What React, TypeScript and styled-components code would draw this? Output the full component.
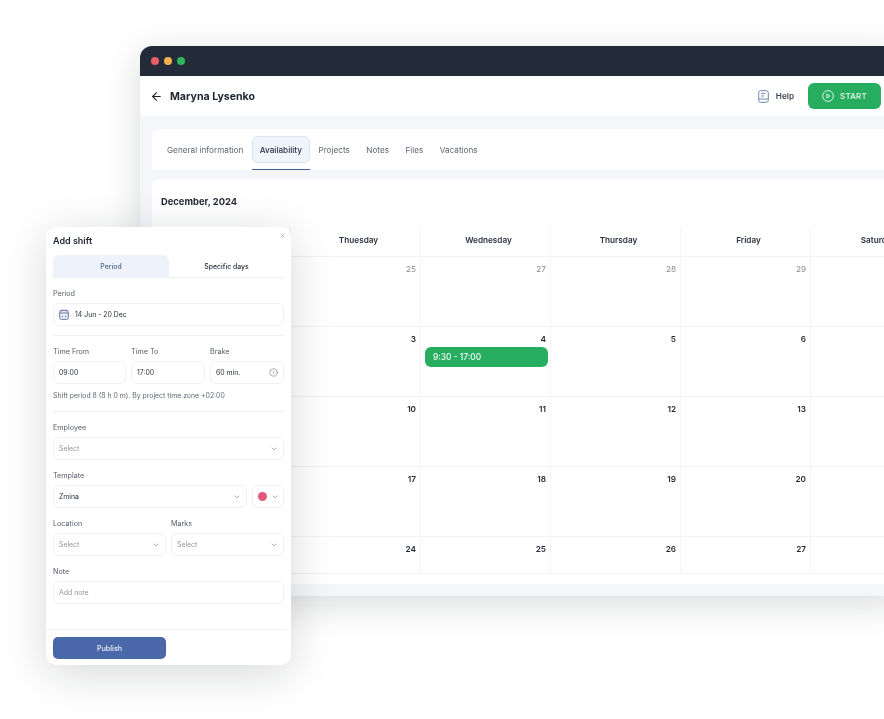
import React from "react";
import styled, { createGlobalStyle } from "styled-components";
import { ArrowLeft, ChevronDown, Info, X } from "lucide-react";

const Global = createGlobalStyle`
  html, body { margin: 0; padding: 0; background: #fff; }
  body { font-family: Inter, "Liberation Sans", sans-serif; color: #1f2733; }
  * { box-sizing: border-box; }
`;

const Stage = styled.div`
  position: relative;
  width: 884px;
  height: 719px;
  overflow: hidden;
  background: #fff;
  filter: blur(0.3px);
`;

const AppWindow = styled.div`
  position: absolute;
  left: 140px;
  top: 46px;
  width: 760px;
  height: 550px;
  display: flex;
  flex-direction: column;
  background: #f4f6fa;
  border-radius: 12px 12px 0 0;
  box-shadow: 0 8px 36px rgba(20, 24, 32, 0.16);
`;

const TitleBar = styled.div`
  height: 30px;
  flex: none;
  display: flex;
  align-items: center;
  gap: 5px;
  padding-left: 11px;
  background: #232b38;
  border-radius: 12px 12px 0 0;
`;

const Dot = styled.span<{ $c: string }>`
  width: 8px;
  height: 8px;
  border-radius: 50%;
  background: ${(p) => p.$c};
`;

const Header = styled.div`
  height: 40px;
  flex: none;
  display: flex;
  align-items: center;
  background: #fff;
  padding: 0 0 0 10px;
  width: 744px;
`;

const Name = styled.div`
  margin-left: 7px;
  font-size: 10.6px;
  font-weight: 700;
  color: #1c2430;
`;

const HelpLink = styled.div`
  margin-left: auto;
  display: flex;
  align-items: center;
  gap: 7px;
  font-size: 8.2px;
  font-weight: 600;
  color: #3c4450;
`;

const StartButton = styled.div`
  margin: 0 3px 0 14px;
  width: 73px;
  height: 26px;
  display: flex;
  align-items: center;
  justify-content: center;
  gap: 6px;
  background: #26ad60;
  border-radius: 6px;
  color: #eef9f2;
  font-size: 8px;
  font-weight: 500;
  letter-spacing: 0.2px;
`;

const Content = styled.div`
  flex: 1;
  display: flex;
  flex-direction: column;
  gap: 9px;
  padding: 13px 0 12px 12px;
`;

const TabsCard = styled.div`
  height: 41px;
  flex: none;
  display: flex;
  padding: 7px 0 0 7px;
  background: #fff;
  border-radius: 6px 0 0 0;
`;

const Tab = styled.div<{ $active?: boolean }>`
  position: relative;
  height: 27px;
  padding: 0 7px;
  margin-right: 0.4px;
  display: flex;
  align-items: center;
  font-size: 8.2px;
  font-weight: ${(p) => (p.$active ? 500 : 400)};
  color: ${(p) => (p.$active ? "#2b3340" : "#5f6670")};
  background: ${(p) => (p.$active ? "#f0f4fb" : "transparent")};
  border: ${(p) => (p.$active ? "1px solid #dbe3f0" : "1px solid transparent")};
  border-radius: 6px;
  &::after {
    content: "";
    display: ${(p) => (p.$active ? "block" : "none")};
    position: absolute;
    left: -1px;
    right: -1px;
    bottom: -8px;
    height: 1px;
    background: #3f5f9f;
  }
`;

const CalendarCard = styled.div`
  flex: 1;
  background: #fff;
  border-radius: 6px 0 0 0;
  padding: 0 0 0 9px;
  display: flex;
  flex-direction: column;
`;

const Month = styled.div`
  height: 48px;
  flex: none;
  padding-top: 17px;
  font-size: 9.4px;
  line-height: 12px;
  font-weight: 700;
  color: #1f2733;
`;

const Grid = styled.div`
  display: grid;
  grid-template-columns: repeat(6, 130px);
  grid-template-rows: 30px repeat(4, 70px) 37px;
`;

const HeadCell = styled.div`
  display: flex;
  align-items: center;
  justify-content: center;
  padding: 0 0 3px 6px;
  font-size: 8.2px;
  font-weight: 600;
  color: #2a3240;
  border-right: 1px solid #f4f5f8;
  border-bottom: 1px solid #f2f3f6;
`;

const DayCell = styled.div<{ $muted?: boolean }>`
  display: flex;
  flex-direction: column;
  align-items: flex-end;
  padding: 7px 4px 0 4px;
  font-size: 8.2px;
  line-height: 11px;
  font-weight: ${(p) => (p.$muted ? 400 : 600)};
  color: ${(p) => (p.$muted ? "#868b93" : "#222a35")};
  border-right: 1px solid #f4f5f8;
  border-bottom: 1px solid #f2f3f6;
`;

const Shift = styled.div`
  align-self: stretch;
  height: 20px;
  margin: 2px -2px 0 0;
  padding-left: 8px;
  display: flex;
  align-items: center;
  background: #27ad60;
  border-radius: 6px;
  color: #fff;
  font-size: 8.4px;
  font-weight: 500;
`;

const Modal = styled.div`
  position: absolute;
  left: 46px;
  top: 227px;
  width: 245px;
  height: 438px;
  background: #fff;
  border-radius: 10px;
  box-shadow: 0 8px 44px rgba(20, 24, 32, 0.17);
  display: flex;
  flex-direction: column;
  padding: 0 7px;
`;

const ModalTitle = styled.div`
  height: 28px;
  flex: none;
  display: flex;
  align-items: center;
  padding-bottom: 1px;
  font-size: 9px;
  line-height: 12px;
  font-weight: 600;
  color: #1f2733;
`;

const CloseBtn = styled.span`
  position: absolute;
  top: 5px;
  right: 5px;
  display: flex;
  color: #8d929a;
`;

const SegTabs = styled.div`
  flex: none;
  height: 23px;
  display: grid;
  grid-template-columns: 116px 1fr;
  border-bottom: 1px solid #eef0f3;
`;

const SegTab = styled.div<{ $active?: boolean }>`
  display: flex;
  align-items: center;
  justify-content: center;
  font-size: 6.9px;
  font-weight: 500;
  color: ${(p) => (p.$active ? "#4e658f" : "#1f2733")};
  background: ${(p) => (p.$active ? "#eef3fb" : "transparent")};
  border-radius: 6px 6px 0 0;
`;

const Section = styled.div<{ $h: number; $line?: boolean }>`
  flex: none;
  height: ${(p) => p.$h}px;
  ${(p) => (p.$line ? "border-bottom: 1px solid #eff1f3;" : "")}
`;

const Row = styled.div<{ $cols: string }>`
  display: grid;
  grid-template-columns: ${(p) => p.$cols};
  gap: 5px;
`;

const Label = styled.div`
  height: 25px;
  padding-top: 11px;
  font-size: 7.2px;
  line-height: 10px;
  color: #555c66;
`;

const Field = styled.div`
  height: 23px;
  display: flex;
  align-items: center;
  gap: 6px;
  padding: 0 5px;
  background: #fff;
  border: 1px solid #f0f1f4;
  border-radius: 6px;
  font-size: 6.9px;
  color: #2a313c;
`;

const ColorField = styled(Field)`
  gap: 4px;
  padding-right: 0;
`;

const Placeholder = styled.span`
  color: #91969e;
`;

const Spread = styled.span`
  flex: 1;
`;

const Hint = styled.div`
  margin-top: 7px;
  font-size: 6.9px;
  line-height: 9px;
  color: #626973;
`;

const ColorDot = styled.span`
  flex: none;
  width: 9px;
  height: 9px;
  border-radius: 50%;
  background: #e2577a;
`;

const Footer = styled.div`
  flex: none;
  margin: 25px -3px 0 -7px;
  padding: 7px 0 0 7px;
  border-top: 1px solid #f0f1f4;
`;

const Publish = styled.div`
  width: 113px;
  height: 22px;
  display: flex;
  align-items: center;
  justify-content: center;
  background: #4a67a9;
  border-radius: 5px;
  color: #eef2fa;
  font-size: 7.2px;
  font-weight: 500;
`;

const ChevronWrap = styled.span`
  flex: none;
  display: flex;
`;

const HelpIcon = () => (
  <svg width="11" height="13" viewBox="0 0 11 13" fill="none" stroke="#7687b5" strokeWidth="1">
    <rect x="0.7" y="0.7" width="9.6" height="11.6" rx="2" />
    <path d="M0.7 9h9.6M3 3.6h4.6M3 6h3" />
  </svg>
);

const PlayIcon = () => (
  <svg width="12" height="12" viewBox="0 0 12 12" fill="none" stroke="#eef9f2" strokeWidth="0.9">
    <circle cx="6" cy="6" r="5.4" />
    <path d="M4.8 3.9 8 6 4.8 8.1Z" />
  </svg>
);

const CalendarIcon = () => (
  <svg width="10" height="11" viewBox="0 0 10 11" fill="#e8ecf6" stroke="#5a6fa3" strokeWidth="0.9">
    <rect x="0.6" y="1.4" width="8.8" height="9" rx="1.8" />
    <path d="M0.6 4h8.8M3 0.4v2M7 0.4v2M2.6 7.5h1.4M6 7.5h1.4" fill="none" />
  </svg>
);

const Chevron = () => (
  <ChevronWrap>
    <ChevronDown size={8} color="#5f656e" strokeWidth={1.6} />
  </ChevronWrap>
);

const days = ["Monday", "Thuesday", "Wednesday", "Thursday", "Friday", "Saturday"];
const weeks: { n: string; muted?: boolean }[][] = [
  [{ n: "24", muted: true }, { n: "25", muted: true }, { n: "27", muted: true }, { n: "28", muted: true }, { n: "29", muted: true }, { n: "30", muted: true }],
  [{ n: "2" }, { n: "3" }, { n: "4" }, { n: "5" }, { n: "6" }, { n: "7" }],
  [{ n: "9" }, { n: "10" }, { n: "11" }, { n: "12" }, { n: "13" }, { n: "14" }],
  [{ n: "16" }, { n: "17" }, { n: "18" }, { n: "19" }, { n: "20" }, { n: "21" }],
  [{ n: "23" }, { n: "24" }, { n: "25" }, { n: "26" }, { n: "27" }, { n: "28" }],
];

export default function App() {
  return (
    <Stage>
      <Global />
      <AppWindow>
        <TitleBar>
          <Dot $c="#ee5e68" />
          <Dot $c="#f5b04b" />
          <Dot $c="#2db85f" />
        </TitleBar>
        <Header>
          <ArrowLeft size={13} color="#1c2430" strokeWidth={2} />
          <Name>Maryna Lysenko</Name>
          <HelpLink>
            <HelpIcon />
            Help
          </HelpLink>
          <StartButton>
            <PlayIcon />
            START
          </StartButton>
        </Header>
        <Content>
          <TabsCard>
            <Tab>General information</Tab>
            <Tab $active>Availability</Tab>
            <Tab>Projects</Tab>
            <Tab>Notes</Tab>
            <Tab>Files</Tab>
            <Tab>Vacations</Tab>
          </TabsCard>
          <CalendarCard>
            <Month>December, 2024</Month>
            <Grid>
              {days.map((d) => (
                <HeadCell key={d}>{d}</HeadCell>
              ))}
              {weeks.map((w) =>
                w.map((c, i) => (
                  <DayCell key={`${c.n}-${i}`} $muted={c.muted}>
                    {c.n}
                    {c.n === "4" && <Shift>9:30 - 17:00</Shift>}
                  </DayCell>
                ))
              )}
            </Grid>
          </CalendarCard>
        </Content>
      </AppWindow>

      <Modal>
        <ModalTitle>Add shift</ModalTitle>
        <CloseBtn>
          <X size={7} strokeWidth={2} />
        </CloseBtn>
        <SegTabs>
          <SegTab $active>Period</SegTab>
          <SegTab>Specific days</SegTab>
        </SegTabs>
        <Section $h={58} $line>
          <Label>Period</Label>
          <Field>
            <CalendarIcon />
            14 Jun - 20 Dec
          </Field>
        </Section>
        <Section $h={76} $line>
          <Row $cols="73px 74px 74px">
            <div>
              <Label>Time From</Label>
              <Field>09:00</Field>
            </div>
            <div>
              <Label>Time To</Label>
              <Field>17:00</Field>
            </div>
            <div>
              <Label>Brake</Label>
              <Field>
                60 min.
                <Spread />
                <Info size={9} color="#5d646e" strokeWidth={1.4} />
              </Field>
            </div>
          </Row>
          <Hint>Shift period 8 (8 h 0 m). By project time zone +02:00</Hint>
        </Section>
        <Section $h={48}>
          <Label>Employee</Label>
          <Field>
            <Placeholder>Select</Placeholder>
            <Spread />
            <Chevron />
          </Field>
        </Section>
        <Section $h={48}>
          <Label>Template</Label>
          <Row $cols="194px 32px">
            <Field>
              Zmina
              <Spread />
              <Chevron />
            </Field>
            <ColorField>
              <ColorDot />
              <Chevron />
            </ColorField>
          </Row>
        </Section>
        <Section $h={48}>
          <Row $cols="113px 113px">
            <div>
              <Label>Location</Label>
              <Field>
                <Placeholder>Select</Placeholder>
                <Spread />
                <Chevron />
              </Field>
            </div>
            <div>
              <Label>Marks</Label>
              <Field>
                <Placeholder>Select</Placeholder>
                <Spread />
                <Chevron />
              </Field>
            </div>
          </Row>
        </Section>
        <Section $h={48}>
          <Label>Note</Label>
          <Field>
            <Placeholder>Add note</Placeholder>
          </Field>
        </Section>
        <Footer>
          <Publish>Publish</Publish>
        </Footer>
      </Modal>
    </Stage>
  );
}
